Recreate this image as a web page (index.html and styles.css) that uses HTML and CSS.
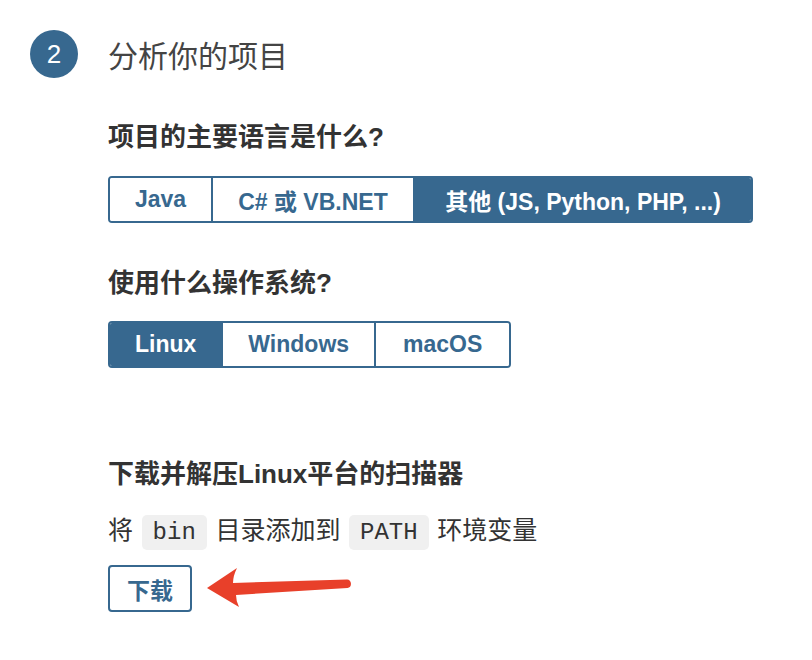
FILE: index.html
```html
<!DOCTYPE html>
<html lang="zh-CN">
<head>
<meta charset="utf-8">
<title>分析你的项目</title>
<link rel="stylesheet" href="styles.css">
</head>
<body>
<div class="page">
  <div class="step-header">
    <div class="step-num">2</div>
    <h2 class="step-title">分析你的项目</h2>
  </div>
  <div class="step-body">
    <h3 class="q q-first">项目的主要语言是什么?</h3>
    <div class="seg">
      <button class="seg-btn">Java</button>
      <button class="seg-btn">C# 或 VB.NET</button>
      <button class="seg-btn active wide">其他 (JS, Python, PHP, ...)</button>
    </div>
    <h3 class="q q-second">使用什么操作系统?</h3>
    <div class="seg">
      <button class="seg-btn active">Linux</button>
      <button class="seg-btn">Windows</button>
      <button class="seg-btn mac">macOS</button>
    </div>
    <h3 class="q q-third">下载并解压Linux平台的扫描器</h3>
    <p class="instr">将 <code>bin</code> 目录添加到 <code>PATH</code> 环境变量</p>
    <div class="dl-row">
      <button class="dl-btn">下载</button>
      <svg class="arrow" width="155" height="50" viewBox="0 0 155 50" aria-hidden="true">
        <path d="M7 27 L37 7 Q33 15 33 22 L147 18.5 A4.3 4.3 0 0 1 147.5 27 L36 34 Q36 40 39 46 Z" fill="#e8402a"/>
      </svg>
    </div>
  </div>
</div>
</body>
</html>
```

FILE: styles.css
```css
* { box-sizing: border-box; }
html, body { margin: 0; padding: 0; background: #fff; }
body {
  font-family: "Liberation Sans", "Noto Sans CJK SC", sans-serif;
  color: #333;
}
.page { padding: 30px 0 0 30px; }
.step-header { display: flex; align-items: center; gap: 30px; height: 48px; }
.step-num {
  width: 48px; height: 48px; border-radius: 50%;
  background: #37688f; color: #fff;
  display: flex; align-items: center; justify-content: center;
  font-size: 26px; font-family: "Liberation Sans", sans-serif;
}
.step-title {
  margin: 0; font-weight: 400; font-size: 30px; color: #444;
  font-family: "Noto Sans CJK SC", sans-serif; line-height: 48px;
}
.step-body { margin-left: 78px; }
.q {
  margin: 0; font-size: 26px; font-weight: 700; color: #333; line-height: 34px;
}
.q-first { margin-top: 42px; }
.q-second { margin-top: 43px; }
.q-third { margin-top: 89px; }
.seg {
  display: inline-flex; margin-top: 22px;
  border: 2px solid #37688f; border-radius: 4px; overflow: hidden;
  height: 47px;
}
.q-second + .seg { margin-top: 21px; }
.seg-btn {
  font-family: "Liberation Sans", "Noto Sans CJK SC", sans-serif;
  font-size: 23px; font-weight: 700; color: #37688f; background: #fff;
  border: 0; border-left: 2px solid #37688f; padding: 0 25px; margin: 0;
  display: flex; align-items: center;
}
.seg-btn:first-child { border-left: 0; }
.seg-btn.active { background: #37688f; color: #fff; }
.seg-btn.wide { padding: 0 30.5px; }
.seg-btn.mac { padding: 0 27px; }
.instr {
  margin: 19px 0 0; font-size: 25px; line-height: 36px; color: #333;
  font-family: "Noto Sans CJK SC", sans-serif;
}
code {
  font-family: "Liberation Mono", "DejaVu Sans Mono", monospace;
  font-size: 24px; background: #f0f0f0; border-radius: 5px;
  padding: 4px 11px; margin: 0 3px; color: #333;
}
.dl-row { position: relative; margin-top: 14px; height: 47px; }
.dl-btn {
  height: 47px; padding: 0 17px; background: #fff;
  border: 2px solid #37688f; border-radius: 4px;
  font-family: "Noto Sans CJK SC", sans-serif;
  font-size: 23px; font-weight: 700; color: #37688f;
}
.arrow { position: absolute; left: 92px; top: -4px; }
```
